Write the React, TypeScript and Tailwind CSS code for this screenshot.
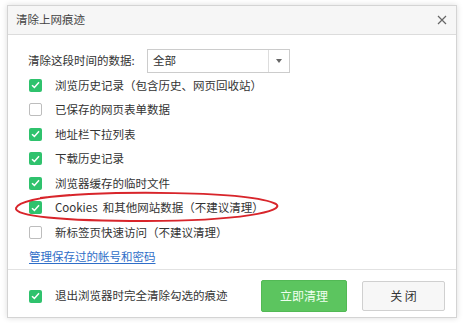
import React from 'react';

const rows: { label: string; checked: boolean }[] = [
  { label: '浏览历史记录（包含历史、网页回收站）', checked: true },
  { label: '已保存的网页表单数据', checked: false },
  { label: '地址栏下拉列表', checked: true },
  { label: '下载历史记录', checked: true },
  { label: '浏览器缓存的临时文件', checked: true },
  { label: 'Cookies\u00a0 和其他网站数据（不建议清理）', checked: true },
  { label: '新标签页快速访问（不建议清理）', checked: false },
];

const CheckBox: React.FC<{ checked: boolean }> = ({ checked }) =>
  checked ? (
    <span className="w-[13px] h-[13px] rounded-[2px] bg-[#2fc26d] flex items-center justify-center shrink-0">
      <svg width="9" height="8" viewBox="0 0 9 8">
        <path d="M1 4.2 L3.4 6.4 L8 1.3" fill="none" stroke="#fff" strokeWidth="1.5" />
      </svg>
    </span>
  ) : (
    <span className="w-[13px] h-[13px] rounded-[2px] border border-[#bdbdbd] bg-white shrink-0" />
  );

export default function App() {
  return (
    <div
      className="relative w-[463px] h-[323px] bg-white pt-[5px] pl-[7px] text-[#333]"
      style={{ fontFamily: '"Noto Sans CJK SC", "Noto Sans", sans-serif' }}
    >
      <div className="w-[450px] h-[313px] border border-[#d4d4d4] bg-white shadow-[0_0_6px_rgba(0,0,0,0.14)] flex flex-col">
        {/* title bar */}
        <div className="h-[29px] bg-[#f6f6f6] border-b border-[#dcdcdc] flex items-center justify-between pl-[8px] pr-[9px] shrink-0">
          <span className="text-[11.5px] text-[#444]">清除上网痕迹</span>
          <svg width="10" height="10" viewBox="0 0 10 10">
            <path d="M1 1 L9 9 M9 1 L1 9" stroke="#666" strokeWidth="1.2" />
          </svg>
        </div>

        {/* body */}
        <div className="flex-1 pt-[14px] pl-[20px] text-[11.5px]">
          <div className="h-[24px] flex items-center">
            <span className="w-[119px]">清除这段时间的数据:</span>
            <div className="w-[143px] h-[24px] border border-[#cccccc] bg-white flex items-center">
              <span className="flex-1 pl-[5px]">全部</span>
              <span className="w-[21px] h-full border-l border-[#dddddd] flex items-center justify-center">
                <svg width="6" height="4" viewBox="0 0 6 4">
                  <path d="M0 0 L6 0 L3 4 Z" fill="#666" />
                </svg>
              </span>
            </div>
          </div>
          {rows.map(r => (
            <div key={r.label} className="h-[24.5px] flex items-center pl-[1px]">
              <CheckBox checked={r.checked} />
              <span className="ml-[13px] whitespace-pre">{r.label}</span>
            </div>
          ))}
          <div className="h-[24.5px] flex items-center pl-[1px]">
            <span className="text-[#2f6ec8] underline underline-offset-2">管理保存过的帐号和密码</span>
          </div>
        </div>

        {/* footer */}
        <div className="h-[49px] border-t border-[#e2e2e2] flex items-center pl-[21px] pr-[11px] pt-[4px] shrink-0">
          <CheckBox checked />
          <span className="ml-[13px] text-[11.5px] flex-1">退出浏览器时完全清除勾选的痕迹</span>
          <button className="w-[86px] h-[32px] rounded-[2px] bg-[#5cc55f] border border-[#52b955] text-[#effff0] text-[12px]">
            立即清理
          </button>
          <button className="ml-[15px] w-[83px] h-[30px] rounded-[2px] bg-[#f7f7f7] border border-[#d0d0d0] text-[12px] text-[#333]">
            关 闭
          </button>
        </div>
      </div>

      {/* red annotation ellipse */}
      <svg className="absolute left-0 top-0 pointer-events-none" width="463" height="323" viewBox="0 0 463 323">
        <path
          d="M40 198 C 110 190, 250 191, 276 204 C 286 211, 240 221, 146 221 C 60 221, 14 216, 16 208 C 18 202, 40 197, 70 195"
          fill="none"
          stroke="#d8252b"
          strokeWidth="2"
        />
      </svg>
    </div>
  );
}
